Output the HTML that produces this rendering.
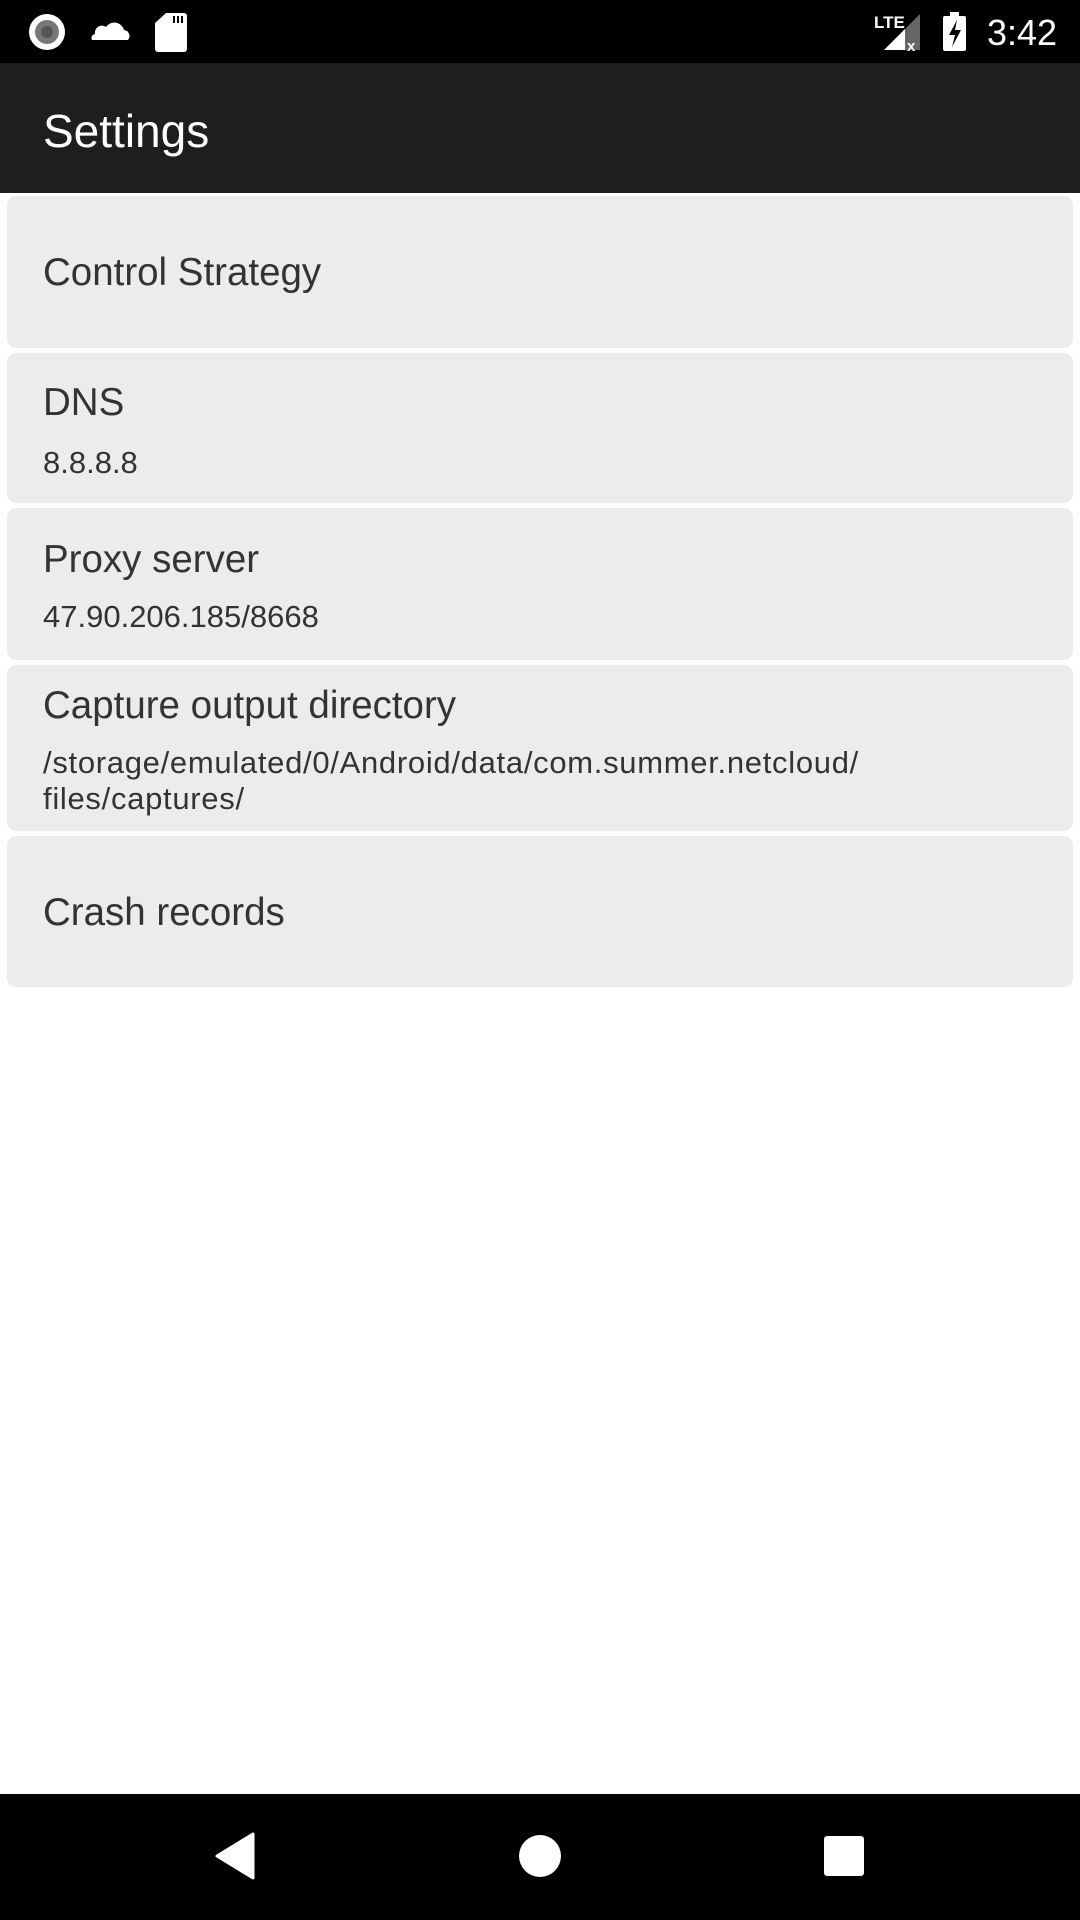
<!DOCTYPE html>
<html><head><meta charset="utf-8"><style>
*{margin:0;padding:0;box-sizing:border-box}
body{width:1080px;height:1920px;background:#fff;position:relative;overflow:hidden;font-family:"Liberation Sans",sans-serif}
.abs{position:absolute;white-space:nowrap;line-height:1}
.card{position:absolute;left:7px;width:1066px;background:#ececec;border-radius:9px}
.t{font-size:38.5px;color:#333;left:43px}
.s{font-size:31px;color:#333;left:43px}
.p{letter-spacing:0.7px}
</style></head><body>
<div style="position:absolute;left:0;top:0;width:1080px;height:63px;background:#000"></div>
<svg style="position:absolute;left:0;top:0" width="1080" height="63">
<circle cx="47" cy="32" r="18" fill="#fff"/><circle cx="47" cy="32" r="12" fill="#777"/><circle cx="47" cy="32" r="6" fill="#555"/>
<path d="M92 40 h36 a6 6 0 0 0 -4 -10 a10 10 0 0 0 -18 -3 a7 7 0 0 0 -11 7 a4 4 0 0 0 -3 6z" fill="#fff"/>
<path d="M166 13 h18 a3 3 0 0 1 3 3 v33 a3 3 0 0 1 -3 3 h-26 a3 3 0 0 1 -3 -3 v-26z" fill="#fff"/>
<rect x="173" y="16" width="2" height="7" fill="#000"/><rect x="177" y="16" width="2" height="7" fill="#000"/><rect x="181" y="16" width="2" height="7" fill="#000"/>
<text x="874" y="28" fill="#fff" font-size="17" font-family="Liberation Sans" font-weight="bold">LTE</text>
<path d="M884 50 L920 14 V50Z" fill="#666"/><path d="M884 50 L905 29 V50Z" fill="#fff"/>
<text x="907" y="51" fill="#fff" font-size="15" font-family="Liberation Sans" font-weight="bold">x</text>
<rect x="943" y="16" width="23" height="35" rx="2" fill="#fff"/><rect x="950" y="12" width="9" height="5" fill="#fff"/>
<path d="M957 20 L949 35 H955 L952 47 L961 30 H955Z" fill="#000"/>
</svg>
<div class="abs" style="left:987px;top:15px;font-size:36px;color:#fff">3:42</div>
<div style="position:absolute;left:0;top:63px;width:1080px;height:130px;background:#1e1e1e"></div>
<div class="abs" style="left:43px;top:108px;font-size:46px;color:#fff">Settings</div>

<div class="card" style="top:196px;height:152px"></div>
<div class="abs t" style="top:254px">Control Strategy</div>
<div class="card" style="top:353px;height:150px"></div>
<div class="abs t" style="top:384px">DNS</div>
<div class="abs s" style="top:447px">8.8.8.8</div>
<div class="card" style="top:508px;height:152px"></div>
<div class="abs t" style="top:541px">Proxy server</div>
<div class="abs s" style="top:601px">47.90.206.185/8668</div>
<div class="card" style="top:665px;height:166px"></div>
<div class="abs t" style="top:687px">Capture output directory</div>
<div class="abs s p" style="top:747px">/storage/emulated/0/Android/data/com.summer.netcloud/</div>
<div class="abs s p" style="top:783px">files/captures/</div>
<div class="card" style="top:836px;height:151px"></div>
<div class="abs t" style="top:894px">Crash records</div>

<div style="position:absolute;left:0;top:1794px;width:1080px;height:126px;background:#000"></div>
<svg style="position:absolute;left:0;top:1794px" width="1080" height="126">
<path d="M253 40 V84 L217 62Z" fill="#fff" stroke="#fff" stroke-width="3" stroke-linejoin="round"/>
<circle cx="540" cy="62" r="21" fill="#fff"/>
<rect x="824" y="42" width="40" height="40" rx="3" fill="#fff"/>
</svg>
</body></html>
